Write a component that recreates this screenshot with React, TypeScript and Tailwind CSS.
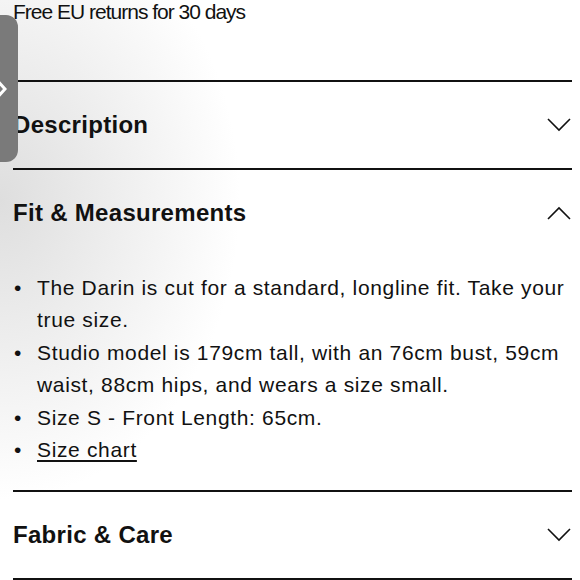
import React from "react";

type SectionProps = {
  title: string;
  open?: boolean;
  children?: React.ReactNode;
};

const Chevron = ({ up }: { up?: boolean }) => (
  <svg width="24" height="14" viewBox="0 0 24 14" fill="none" className="shrink-0">
    <path
      d={up ? "M1 13L12 2L23 13" : "M1 1L12 12L23 1"}
      stroke="#111"
      strokeWidth="1.6"
    />
  </svg>
);

const Section: React.FC<SectionProps> = ({ title, open, children }) => {
  return (
    <div className="border-t-2 border-[#111]">
      <div className="flex items-center justify-between h-[86px] pr-[1px]">
        <h2 className="text-[24px] font-bold tracking-[0.3px] text-[#111]">{title}</h2>
        <Chevron up={open} />
      </div>
      {open && children}
    </div>
  );
};

const fitItems = [
  "The Darin is cut for a standard, longline fit. Take your true size.",
  "Studio model is 179cm tall, with an 76cm bust, 59cm waist, 88cm hips, and wears a size small.",
  "Size S - Front Length: 65cm.",
];

export default function App() {
  return (
    <div
      className="relative w-[580px] h-[580px] overflow-hidden bg-[radial-gradient(ellipse_240px_300px_at_0px_200px,#dedede,#ffffff)] text-[#111]"
      style={{ fontFamily: '"Liberation Sans", Arial, sans-serif' }}
    >
      <div className="pl-[13px] pr-[8px]">
        <p className="text-[21px] leading-[26px] tracking-[-1px] h-[81px] -mt-[1px]">
          Free EU returns for 30 days
        </p>
        <Section title="Description" />
        <Section title="Fit & Measurements" open>
          <ul className="pt-[16px] pb-[24px] text-[21px] leading-[32.4px] tracking-[0.65px]">
            {fitItems.map((item) => (
              <li key={item} className="flex">
                <span className="w-[24px] shrink-0 pl-[1px]">•</span>
                <span>{item}</span>
              </li>
            ))}
            <li className="flex">
              <span className="w-[24px] shrink-0 pl-[1px]">•</span>
              <a href="#" className="underline underline-offset-[3px]">
                Size chart
              </a>
            </li>
          </ul>
        </Section>
        <Section title="Fabric & Care" />
        <div className="border-t-2 border-[#111]" />
      </div>

      {/* back-swipe indicator */}
      <div className="absolute left-0 top-[15px] w-[18px] h-[147px] rounded-r-[12px] bg-[#7a7a7a] overflow-hidden">
        <svg width="12" height="24" viewBox="0 0 12 24" className="absolute -left-[5px] top-[62px]">
          <path d="M1 2L10 12L1 22" stroke="#fff" strokeWidth="3" fill="none" />
        </svg>
      </div>
    </div>
  );
}
